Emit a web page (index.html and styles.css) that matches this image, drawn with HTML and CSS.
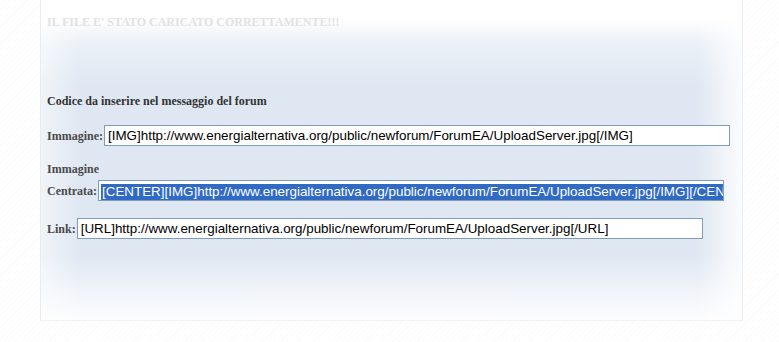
FILE: index.html
```html
<!DOCTYPE html>
<html lang="it">
<head>
  <meta charset="UTF-8" />
  <title>Upload - Forum EA</title>
  <link rel="stylesheet" href="styles.css">
</head>
<body>
  <div class="page">
    <div class="panel">
      <p class="done">IL FILE E' STATO CARICATO CORRETTAMENTE!!!</p>

      <p class="heading">Codice da inserire nel messaggio del forum</p>

      <div class="row">
        <label for="img">Immagine:</label>
        <input class="code" id="img" type="text" readonly
          value="[IMG]http://www.energialternativa.org/public/newforum/ForumEA/UploadServer.jpg[/IMG]">
      </div>

      <div class="group">
        <span class="label-top">Immagine</span>
        <div class="row tight">
          <label>Centrata:</label>
          <div class="code selected"><span>[CENTER][IMG]http://www.energialternativa.org/public/newforum/ForumEA/UploadServer.jpg[/IMG][/CENTER]</span></div>
        </div>
      </div>

      <div class="row">
        <label for="link">Link:</label>
        <input class="code" id="link" type="text" readonly
          value="[URL]http://www.energialternativa.org/public/newforum/ForumEA/UploadServer.jpg[/URL]">
      </div>
    </div>
  </div>
</body>
</html>
```

FILE: styles.css
```css
body {
  margin: 0;
  background: #fff;
  font-family: "Liberation Serif", "Times New Roman", serif;
}

.page {
  width: 779px;
  height: 342px;
  background:
    repeating-linear-gradient(135deg, #fff 0, #fff 3px, #fbfbfb 3px, #fbfbfb 4px);
}

.panel {
  box-sizing: border-box;
  margin-left: 40px;
  width: 703px;
  height: 321px;
  padding: 15px 0 0 6px;
  border-left: 1px solid #ebebeb;
  border-right: 1px solid #eeeeee;
  border-bottom: 1px solid #f2f2f2;
  background:
    linear-gradient(to right, rgba(255,255,255,0.55) 0, rgba(255,255,255,0) 40px, rgba(255,255,255,0) 655px, rgba(255,255,255,0.9) 702px),
    linear-gradient(to bottom, #fff 0, #fff 18px, #eaf0f7 45px, #dfe7f2 85px, #dfe7f2 255px, #f6f8fc 305px, #fdfdfe 320px);
}

.done {
  margin: 0;
  font-size: 12px;
  line-height: 14px;
  font-weight: bold;
  color: #e2e2e2;
}

.heading {
  margin: 65px 0 0;
  font-size: 12px;
  line-height: 14px;
  font-weight: bold;
  color: #333;
}

.row {
  display: flex;
  align-items: center;
  gap: 1px;
  margin-top: 17px;
}

.row.tight {
  margin-top: 4px;
}

.group {
  margin-top: 16px;
}

label, .label-top {
  display: block;
  font-size: 12px;
  line-height: 14px;
  font-weight: bold;
  color: #4a4a4a;
}

.code {
  box-sizing: border-box;
  width: 626px;
  height: 21px;
  margin: 0;
  padding: 0 0 0 3px;
  border: 1px solid #7f9db9;
  background: #fff;
  color: #000;
  font-family: "Liberation Sans", Arial, sans-serif;
  font-size: 13.4px;
  line-height: 19px;
  outline: none;
}

.selected {
  overflow: hidden;
  white-space: nowrap;
  padding: 1px 0 0 2px;
}

.selected span {
  display: inline-block;
  line-height: 16px;
  background: #316ac5;
  color: #fff;
  padding-left: 1px;
}
```
